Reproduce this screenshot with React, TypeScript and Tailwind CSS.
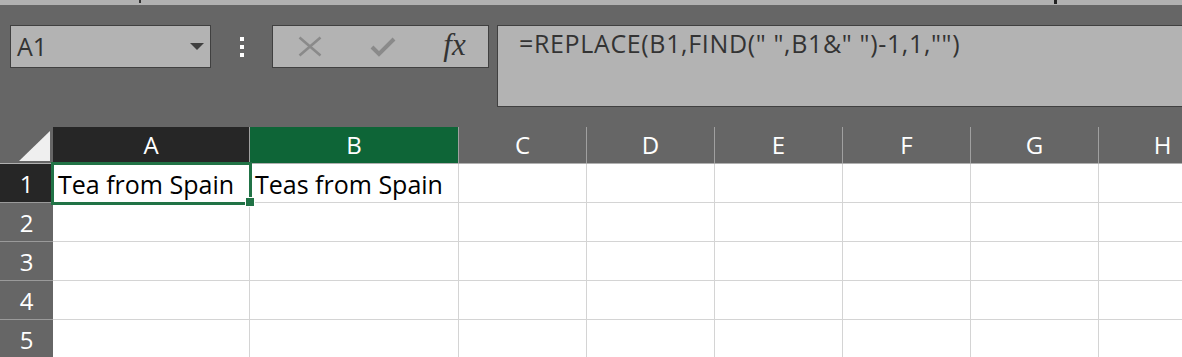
import { Fragment } from 'react';

const COLUMNS = [
  { label: 'A', width: 'w-[197px]' },
  { label: 'B', width: 'w-[209px]' },
  { label: 'C', width: 'w-[128px]' },
  { label: 'D', width: 'w-[128px]' },
  { label: 'E', width: 'w-[128px]' },
  { label: 'F', width: 'w-[128px]' },
  { label: 'G', width: 'w-[128px]' },
  { label: 'H', width: 'w-[128px]' },
];

const ROWS = [1, 2, 3, 4, 5];

const CELLS: Record<string, string> = {
  A1: 'Tea from Spain',
  B1: 'Teas from Spain',
};

function headerBg(label: string) {
  if (label === 'A') return 'bg-[#262626]';
  if (label === 'B') return 'bg-[#0e6537]';
  return 'bg-[#666666]';
}

export default function App() {
  return (
    <div className="w-[1182px] h-[357px] overflow-hidden bg-[#666666] font-['Open_Sans',sans-serif]">
      {/* ribbon edge */}
      <div className="h-[5px] bg-[#b1b1b1] relative">
        <span className="absolute left-[139px] top-0 w-[2px] h-[3px] bg-[#333]" />
        <span className="absolute left-[1054px] top-0 w-[3px] h-[4px] bg-[#222]" />
      </div>

      {/* formula bar */}
      <div className="h-[122px] pt-[20px] flex items-start">
        <div className="ml-[10px] w-[201px] h-[43px] border border-[#404040] bg-[#b3b3b3] flex items-center justify-between pl-[6px] pr-[6px]">
          <span className="text-[25px] text-[#333] leading-none">A1</span>
          <svg width="14" height="7" viewBox="0 0 14 7">
            <path d="M0 0h14L7 7z" fill="#404040" />
          </svg>
        </div>

        <div className="w-[61px] h-[43px] flex flex-col items-center justify-center gap-[4px]">
          <span className="w-[4px] h-[4px] bg-white" />
          <span className="w-[4px] h-[4px] bg-white" />
          <span className="w-[4px] h-[4px] bg-white" />
        </div>

        <div className="w-[217px] h-[43px] border border-[#404040] bg-[#b3b3b3] flex items-center">
          <div className="w-[71px] flex justify-center">
            <svg width="24" height="21" viewBox="0 0 24 21" className="ml-[2px]">
              <path d="M1.5 1.5L22.5 19.5M22.5 1.5L1.5 19.5" stroke="#8a8a8a" strokeWidth="2.6" fill="none" />
            </svg>
          </div>
          <div className="w-[71px] flex justify-center">
            <svg width="26" height="21" viewBox="0 0 26 21" className="ml-[6px]">
              <path d="M2 11L9 18L24 3" stroke="#8a8a8a" strokeWidth="4" fill="none" />
            </svg>
          </div>
          <div className="flex-1 flex justify-center">
            <span className="font-['Liberation_Serif',serif] italic text-[31px] leading-none text-[#333] -mt-[4px] ml-[6px]">
              fx
            </span>
          </div>
        </div>

        <div className="ml-[8px] flex-1 h-[82px] border border-r-0 border-[#404040] bg-[#b3b3b3] pl-[21px] pt-[5px]">
          <span className="text-[25px] text-[#333] leading-none whitespace-pre tracking-[0.65px]">
            =REPLACE(B1,FIND(" ",B1&amp;" ")-1,1,"")
          </span>
        </div>
      </div>

      {/* sheet */}
      <div className="flex flex-col">
        <div className="flex h-[37px] border-b border-[#b0b0b0]">
          <div className="w-[53px] shrink-0 flex items-end justify-end pr-[3px] pb-[2px]">
            <svg width="31" height="30" viewBox="0 0 31 30">
              <path d="M31 0V30H0z" fill="#efefef" />
            </svg>
          </div>
          {COLUMNS.map((col) => (
            <div
              key={col.label}
              className={`${col.width} shrink-0 ${headerBg(col.label)} border-r border-[#a0a0a0] flex items-center justify-center text-white text-[24px] leading-none`}
            >
              {col.label}
            </div>
          ))}
        </div>

        <div className="relative">
          {ROWS.map((row) => (
            <div key={row} className="flex h-[39px]">
              <div
                className={`w-[53px] shrink-0 ${row === 1 ? 'bg-[#262626]' : 'bg-[#666666]'} border-b border-[#9a9a9a] flex items-center justify-center text-white text-[24px] leading-none pt-[2px]`}
              >
                {row}
              </div>
              {COLUMNS.map((col) => {
                const ref = `${col.label}${row}`;
                return (
                  <Fragment key={ref}>
                    <div
                      className={`${col.width} shrink-0 bg-white border-r border-b border-[#d4d4d4] flex items-center pl-[5px] pt-[3px] text-black text-[25px] leading-none whitespace-nowrap`}
                    >
                      {CELLS[ref] ?? ''}
                    </div>
                  </Fragment>
                );
              })}
            </div>
          ))}
          {/* active cell outline */}
          <div className="absolute z-10 left-[51px] -top-[2px] w-[201px] h-[43px] border-[3px] border-[#217346] pointer-events-none" />
          {/* fill handle */}
          <div className="absolute z-20 left-[246px] top-[34px] w-[8px] h-[8px] bg-[#217346] outline outline-1 outline-white" />
        </div>
      </div>
    </div>
  );
}
